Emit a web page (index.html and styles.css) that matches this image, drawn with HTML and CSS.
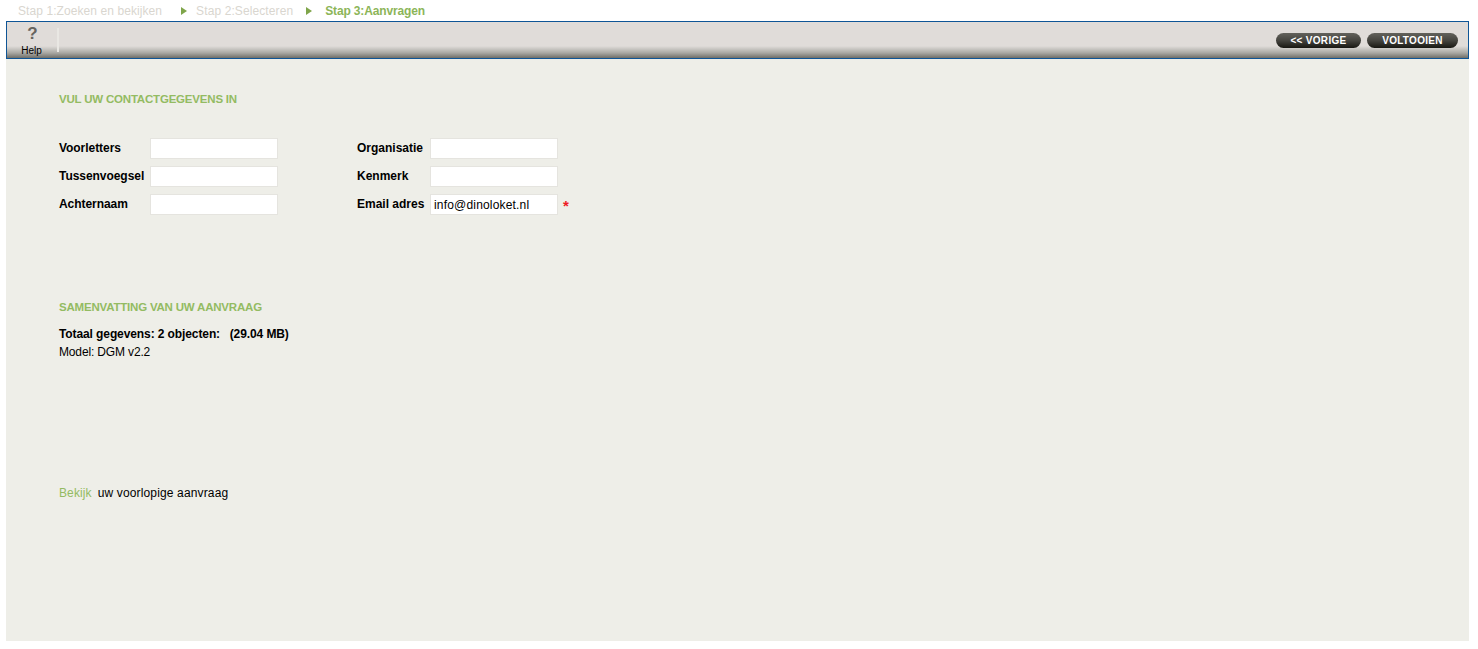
FILE: index.html
```html
<!DOCTYPE html>
<html lang="nl">
<head>
<meta charset="utf-8">
<title>Stap 3: Aanvragen</title>
<link rel="stylesheet" href="styles.css">
</head>
<body>
<nav class="steps">
  <span class="step step-1">Stap 1:Zoeken en bekijken</span>
  <span class="arrow arrow-1"></span>
  <span class="step step-2">Stap 2:Selecteren</span>
  <span class="arrow arrow-2"></span>
  <span class="step-current">Stap 3:Aanvragen</span>
</nav>
<main class="panel">
  <header class="toolbar">
    <div class="help">
      <span class="help-mark">?</span>
      <span class="help-label">Help</span>
    </div>
    <div class="divider"></div>
    <div class="actions">
      <button class="pill pill-prev" type="button">&lt;&lt; VORIGE</button>
      <button class="pill pill-done" type="button">VOLTOOIEN</button>
    </div>
  </header>
  <section class="content">
    <h2 class="heading heading-contact">VUL UW CONTACTGEGEVENS IN</h2>
    <div class="form">
      <div class="column column-left">
        <label class="row"><span class="label">Voorletters</span><input class="field" type="text"></label>
        <label class="row"><span class="label">Tussenvoegsel</span><input class="field" type="text"></label>
        <label class="row"><span class="label">Achternaam</span><input class="field" type="text"></label>
      </div>
      <div class="column column-right">
        <label class="row"><span class="label">Organisatie</span><input class="field" type="text"></label>
        <label class="row"><span class="label">Kenmerk</span><input class="field" type="text"></label>
        <label class="row"><span class="label">Email adres</span><input class="field" type="text" value="info@dinoloket.nl"><span class="required">*</span></label>
      </div>
    </div>
    <h2 class="heading heading-summary">SAMENVATTING VAN UW AANVRAAG</h2>
    <p class="total">Totaal gegevens: 2 objecten: &nbsp; (29.04 MB)</p>
    <p class="model">Model: DGM v2.2</p>
    <p class="preview"><a class="preview-link" href="#">Bekijk</a><span class="preview-text">uw voorlopige aanvraag</span></p>
  </section>
</main>
</body>
</html>
```

FILE: styles.css
```css
* { box-sizing: border-box; }

html, body { height: 100%; }

body {
  margin: 0;
  padding: 0 9px 8px 6px;
  background: #fff;
  font-family: "Liberation Sans", Arial, sans-serif;
  font-size: 12px;
  color: #000;
  overflow: hidden;
}

.steps {
  display: flex;
  align-items: center;
  height: 21px;
  padding: 1px 0 0 12px;
  white-space: nowrap;
}

.step { color: #d9d6cf; }
.step-1 { letter-spacing: 0.08px; }
.step-2 { letter-spacing: 0.1px; }
.step-current { color: #8cb558; font-weight: bold; letter-spacing: -0.15px; }

.arrow {
  width: 0;
  height: 0;
  border-left: 6px solid #7fa54a;
  border-top: 4px solid transparent;
  border-bottom: 4px solid transparent;
}
.arrow-1 { margin: 0 9px 0 19px; }
.arrow-2 { margin: 0 13px 0 13px; }

.panel {
  height: 620px;
  background: #eeeee8;
  display: flex;
  flex-direction: column;
}

.toolbar {
  flex: none;
  height: 38px;
  display: flex;
  align-items: stretch;
  border: 1px solid #0f5596;
  background: linear-gradient(to bottom, #e0dcd9 0, #e0dcd9 24px, #c8c6c2 27px, #a8a7a2 31px, #6f6e68 36px);
}

.help {
  width: 49px;
  display: flex;
  flex-direction: column;
  align-items: center;
}

.help-mark {
  font-size: 17px;
  line-height: 16px;
  margin: 4px 0 0 2px;
  font-weight: bold;
  color: #66645f;
}

.help-label {
  font-size: 10px;
  line-height: 11px;
  margin-top: 3px;
}

.divider {
  width: 2px;
  margin: 6px 0 6px 1px;
  background: #e9e7e3;
}

.actions {
  margin-left: auto;
  display: flex;
  align-items: flex-start;
  gap: 6px;
  padding: 11px 10px 0 0;
}

.pill {
  height: 15px;
  padding: 0;
  border: 0;
  border-radius: 8px;
  background: linear-gradient(to bottom, #63625c 0, #45443f 50%, #181712 100%);
  color: #fff;
  font-family: "Liberation Sans", Arial, sans-serif;
  font-size: 10px;
  font-weight: bold;
  line-height: 15px;
  letter-spacing: 0.3px;
  text-align: center;
}
.pill-prev { width: 85px; }
.pill-done { width: 91px; }

.content {
  flex: 1;
  padding: 33px 0 0 53px;
}

.heading {
  margin: 0;
  font-size: 11.5px;
  font-weight: bold;
  line-height: 14px;
  letter-spacing: -0.2px;
  color: #93bb62;
}

.form {
  display: flex;
  margin-top: 32px;
}

.column {
  display: flex;
  flex-direction: column;
  gap: 6px;
}
.column-left { width: 298px; }

.row {
  display: flex;
  align-items: flex-start;
  height: 22px;
}

.label {
  font-weight: bold;
  line-height: 20px;
}
.column-left .label { width: 91px; letter-spacing: -0.05px; }
.column-right .label { width: 73px; }

.field {
  width: 128px;
  height: 21px;
  padding: 0 3px;
  border: 1px solid #e5e4df;
  background: #fff;
  font-family: "Liberation Sans", Arial, sans-serif;
  font-size: 12px;
  letter-spacing: 0.18px;
  color: #000;
  outline: 0;
}

.required {
  margin: 3px 0 0 5px;
  color: #ee1c25;
  font-size: 15px;
  font-weight: bold;
  line-height: 18px;
}

.heading-summary { margin-top: 84px; }

.total {
  margin: 13px 0 0;
  font-weight: bold;
  line-height: 14px;
  letter-spacing: -0.1px;
}

.model {
  margin: 4px 0 0;
  line-height: 14px;
  letter-spacing: -0.15px;
}

.preview {
  margin: 127px 0 0;
  line-height: 14px;
}

.preview-link {
  color: #93bb62;
  text-decoration: none;
  letter-spacing: 0.1px;
}

.preview-text { margin-left: 6px; letter-spacing: 0.15px; }
```
